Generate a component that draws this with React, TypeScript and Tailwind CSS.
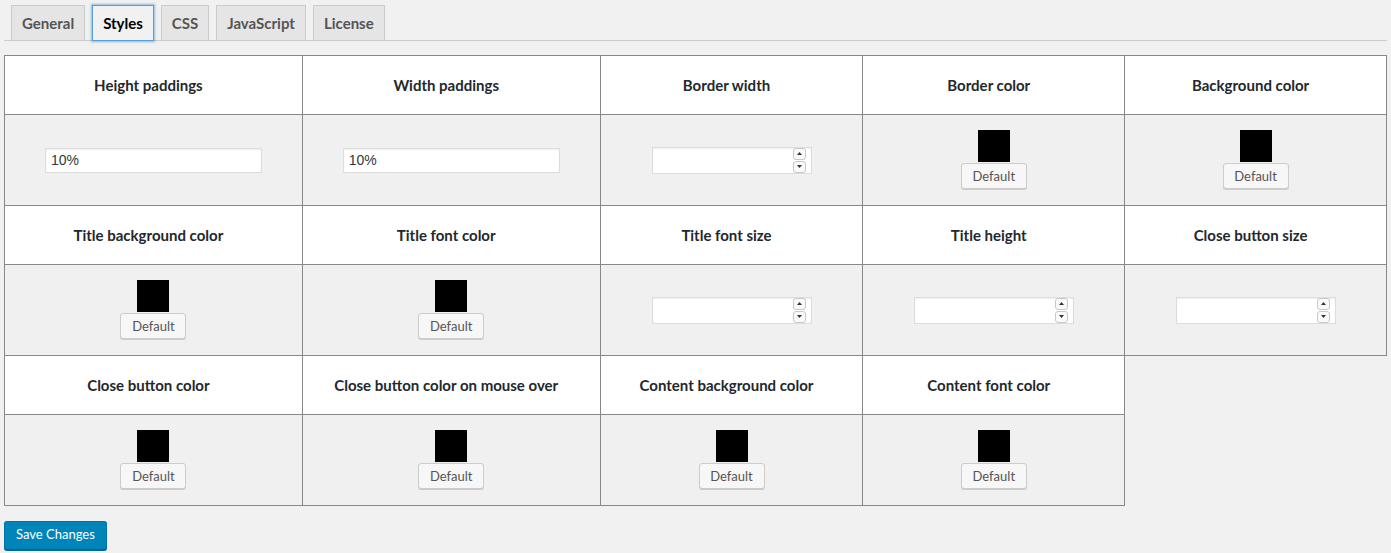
import type { FC } from "react";

type Cell =
  | { label: string; kind: "text"; value: string }
  | { label: string; kind: "number" }
  | { label: string; kind: "color" };

const rows: Cell[][] = [
  [
    { label: "Height paddings", kind: "text", value: "10%" },
    { label: "Width paddings", kind: "text", value: "10%" },
    { label: "Border width", kind: "number" },
    { label: "Border color", kind: "color" },
    { label: "Background color", kind: "color" },
  ],
  [
    { label: "Title background color", kind: "color" },
    { label: "Title font color", kind: "color" },
    { label: "Title font size", kind: "number" },
    { label: "Title height", kind: "number" },
    { label: "Close button size", kind: "number" },
  ],
  [
    { label: "Close button color", kind: "color" },
    { label: "Close button color on mouse over", kind: "color" },
    { label: "Content background color", kind: "color" },
    { label: "Content font color", kind: "color" },
  ],
];

const tabs = ["General", "Styles", "CSS", "JavaScript", "License"];

const SpinInput: FC = () => (
  <div className="mx-auto flex h-[27px] w-[160px] items-center justify-end border border-[#ddd] bg-white pr-[5px] shadow-[inset_0_1px_2px_rgba(0,0,0,0.07)]">
    <div className="flex flex-col gap-px">
      {["up", "down"].map((d) => (
        <span
          key={d}
          className="flex h-[12px] w-[13px] items-center justify-center rounded-[3px] border border-[#c8c8c8] bg-[#fafafa]"
        >
          <svg width="5" height="3" viewBox="0 0 5 3">
            {d === "up" ? (
              <path d="M2.5 0L5 3H0z" fill="#333" />
            ) : (
              <path d="M0 0h5L2.5 3z" fill="#333" />
            )}
          </svg>
        </span>
      ))}
    </div>
  </div>
);

const ColorPicker: FC = () => (
  <div className="flex flex-col items-center">
    <div className="-mt-px h-[32px] w-[32px] bg-black" />
    <button className="mt-px h-[26px] w-[66px] rounded-[3px] border border-[#ccc] bg-[#f7f7f7] pt-px text-[13px] text-[#555] shadow-[0_1px_0_#ccc]">
      Default
    </button>
  </div>
);

const Field: FC<{ cell: Cell }> = ({ cell }) => {
  if (cell.kind === "text")
    return (
      <input
        readOnly
        value={cell.value}
        className="mx-auto block h-[25px] w-[217px] border border-[#ddd] bg-white px-[5px] text-[14px] text-[#32373c] shadow-[inset_0_1px_2px_rgba(0,0,0,0.07)] outline-none [font-family:'Liberation_Sans',Arial,sans-serif]"
      />
    );
  if (cell.kind === "number") return <SpinInput />;
  return <ColorPicker />;
};

const App: FC = () => {
  return (
    <div className="min-h-[553px] bg-[#f1f1f1] px-[4px] pt-[5px] text-[#23282d] [font-family:Lato,'Open_Sans',sans-serif]">
      <div className="flex border-b border-[#ccc] pl-[7px]">
        {tabs.map((t, i) => (
          <span
            key={t}
            className={
              i === 1
                ? "relative -mb-px mr-[7px] border border-[#5b9dd9] bg-[#f1f1f1] px-[10px] pt-px text-[15px] leading-[33px] font-bold text-black shadow-[0_0_2px_1px_rgba(30,140,190,0.5)]"
                : "mr-[7px] border border-b-0 border-[#ccc] bg-[#e5e5e5] px-[10px] pt-px text-[15px] leading-[33px] font-bold text-[#555]"
            }
          >
            {t}
          </span>
        ))}
      </div>

      <table className="mt-[14px] table-fixed border-collapse">
        <colgroup>
          <col className="w-[298px]" />
          <col className="w-[298px]" />
          <col className="w-[263px]" />
          <col className="w-[262px]" />
          <col className="w-[262px]" />
        </colgroup>
        <tbody>
          {rows.map((row, r) => [
            <tr key={`h${r}`}>
              {row.map((c) => (
                <td
                  key={c.label}
                  className="h-[59px] border border-[#888] bg-white pr-[10px] text-center align-middle text-[15px] font-bold"
                >
                  {c.label}
                </td>
              ))}
            </tr>,
            <tr key={`v${r}`}>
              {row.map((c) => (
                <td
                  key={c.label}
                  className="h-[91px] border border-[#888] bg-[#f0f0f0] text-center align-middle"
                >
                  <Field cell={c} />
                </td>
              ))}
            </tr>,
          ])}
        </tbody>
      </table>

      <button className="mt-[15px] h-[29px] rounded-[3px] border border-[#0073aa] border-b-[#006799] bg-[#0085ba] px-[11px] pb-px text-[13px] text-white shadow-[0_1px_0_#006799]">
        Save Changes
      </button>
    </div>
  );
};

export default App;
